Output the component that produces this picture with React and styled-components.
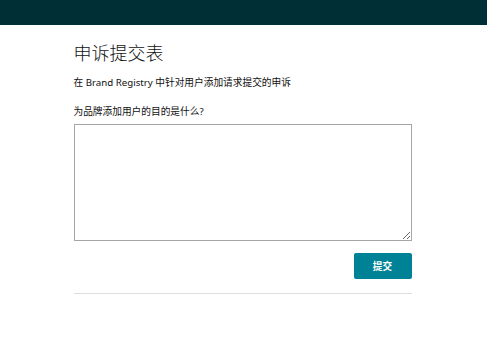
import React from 'react'
import { styled, createGlobalStyle } from 'styled-components'

const Global = createGlobalStyle`
  html, body {
    margin: 0;
    padding: 0;
    background: #ffffff;
  }
  body {
    font-family: "Noto Sans", "Noto Sans CJK SC", sans-serif;
    color: #111111;
  }
`

const App = () => {
  return (
    <>
      <Global />
      <TopBar />
      <Main>
        <Title>申诉提交表</Title>
        <Subtitle>在 Brand Registry 中针对用户添加请求提交的申诉</Subtitle>
        <Label htmlFor='purpose'>为品牌添加用户的目的是什么?</Label>
        <TextBox id='purpose' />
        <Actions>
          <SubmitButton type='button'>提交</SubmitButton>
        </Actions>
        <Divider />
      </Main>
    </>
  )
}

const TopBar = styled.header`
  height: 25px;
  background-color: #002f36;
`

const Main = styled.main`
  width: 338px;
  margin: 0 auto;
  padding-top: 16px;
  display: flex;
  flex-direction: column;
  transform: translateX(-1px);
`

const Title = styled.h1`
  margin: 0;
  font-size: 18px;
  font-weight: 300;
  line-height: 24px;
  color: #111111;
`

const Subtitle = styled.p`
  margin: 12px 0 0;
  font-size: 9.7px;
  line-height: 12px;
  color: #111111;
`

const Label = styled.label`
  margin-top: 17px;
  font-size: 9.7px;
  line-height: 12px;
  color: #111111;
`

const TextBox = styled.textarea`
  margin-top: 6px;
  box-sizing: border-box;
  width: 100%;
  height: 117px;
  border: 1px solid #a6a6a6;
  border-radius: 0;
  outline: none;
  resize: vertical;
  font-family: inherit;
`

const Actions = styled.div`
  display: flex;
  justify-content: flex-end;
  margin-top: 12px;
`

const SubmitButton = styled.button`
  width: 58px;
  height: 26px;
  border: none;
  border-radius: 2px;
  background-color: #008296;
  color: #ffffff;
  font-family: inherit;
  font-size: 9.7px;
  font-weight: 700;
  cursor: pointer;
`

const Divider = styled.hr`
  width: 100%;
  margin: 14px 0 0;
  border: none;
  border-top: 1px solid #dddddd;
`

export default App
